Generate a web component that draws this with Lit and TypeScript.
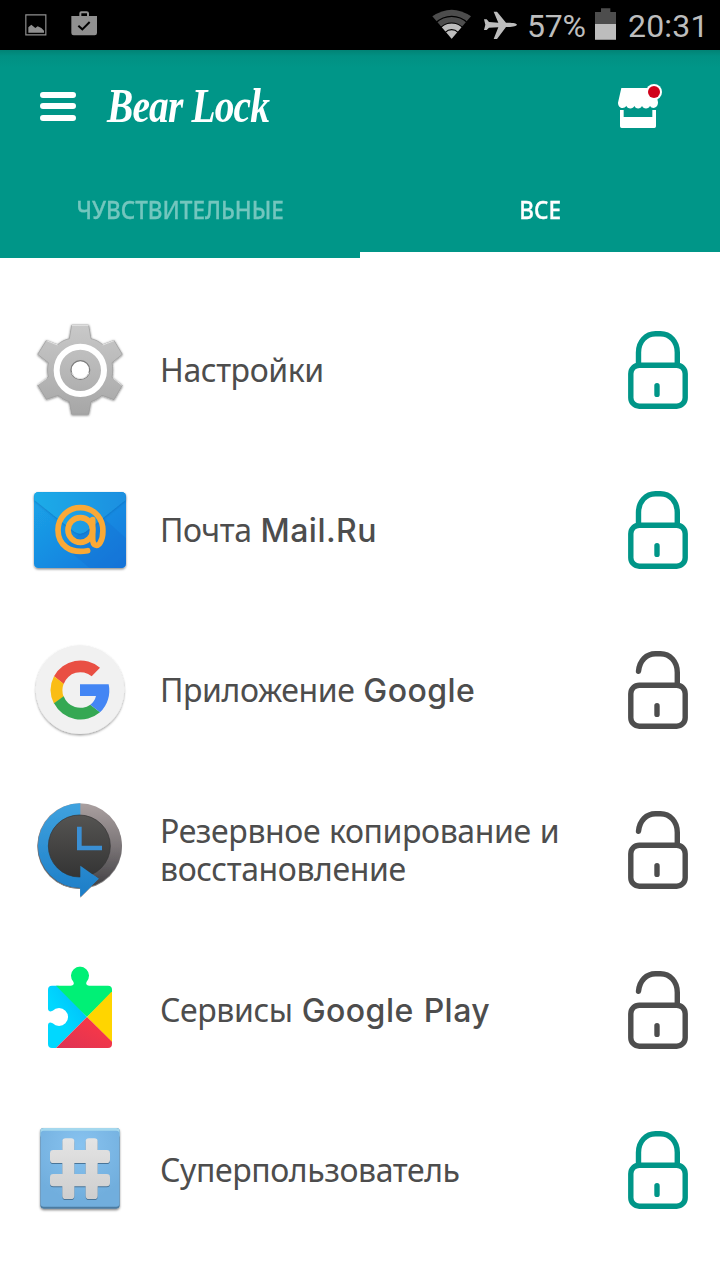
import { LitElement, html, svg, css } from 'lit';
import { customElement, property } from 'lit/decorators.js';
import { classMap } from 'lit/directives/class-map.js';

const settingsIcon = svg`
  <defs>
    <linearGradient id="steel" gradientUnits="userSpaceOnUse" x1="0" y1="44" x2="0" y2="315">
      <stop offset="0" stop-color="#c9c9c9" />
      <stop offset="1" stop-color="#a6a6a6" />
    </linearGradient>
    <filter id="gear-shadow" x="-20%" y="-20%" width="140%" height="140%">
      <feDropShadow dx="0" dy="2" stdDeviation="3" flood-color="#000" flood-opacity=".55" />
    </filter>
  </defs>
  <g filter="url(#gear-shadow)">
    <path fill="url(#steel)" stroke="#999" stroke-width="2" stroke-linejoin="round" d="M155 45H206L213 86C227 89 238 95 248 104L282 91L307 133L276 158C279 173 279 187 276 202L307 226L282 269L246 256C237 264 226 271 213 275L206 313H155L148 275C135 271 124 264 115 256L79 268L53 225L85 201C82 187 82 173 85 158L53 133L79 91L113 104C123 95 134 89 148 86Z" />
  </g>
  <path fill="none" stroke="#fff" stroke-width="2.5" opacity=".8" d="M155 46H206M80 92L113 105M248 105L282 92M54 224L80 205M280 205L306 226" />
  <circle cx="181" cy="181" r="71" fill="none" stroke="#fff" stroke-width="18" />
  <circle cx="181" cy="180" r="28" fill="#fff" stroke="#7d7d7d" stroke-width="4" />
  <path d="M155 188a28 28 0 0 0 52 0" fill="none" stroke="#e6e6e6" stroke-width="3" />
`;

const mailIcon = svg`
  <defs>
    <linearGradient id="mail-body" x1="0" y1="0" x2="1" y2="1">
      <stop offset="0" stop-color="#1ba5e8" />
      <stop offset="1" stop-color="#1476dc" />
    </linearGradient>
    <linearGradient id="mail-flap" x1="0" y1="0" x2="1" y2="0">
      <stop offset="0" stop-color="#1eace8" />
      <stop offset="1" stop-color="#1b8fe0" />
    </linearGradient>
    <filter id="mail-shadow" x="-10%" y="-10%" width="120%" height="125%">
      <feDropShadow dx="0" dy="4" stdDeviation="2.5" flood-color="#000" flood-opacity=".45" />
    </filter>
    <filter id="flap-shadow" x="-10%" y="-10%" width="120%" height="130%">
      <feDropShadow dx="0" dy="3" stdDeviation="3" flood-color="#0b4f9d" flood-opacity=".4" />
    </filter>
  </defs>
  <rect x="42" y="66" width="276" height="228" rx="13" fill="url(#mail-body)" filter="url(#mail-shadow)" />
  <path fill="#1268ca" opacity=".25" d="M240 134L318 205V280Q318 293 305 293H208L133 231Z" />
  <path fill="url(#mail-flap)" filter="url(#flap-shadow)" d="M43 90V79Q43 67 55 67H305Q317 67 317 79V90L199 184Q180 198 161 184Z" />
  <g fill="none" stroke="#faa936" stroke-width="17" stroke-linecap="round">
    <circle cx="181" cy="180" r="37" />
    <path d="M218 149V207C218 229 233 231 241 217C248 205 250 190 248 170C242 136 216 113 181 113C143 113 114 143 114 180C114 224 149 252 203 242" />
  </g>
`;

const googleIcon = svg`
  <defs>
    <filter id="disc-shadow" x="-10%" y="-10%" width="120%" height="125%">
      <feDropShadow dx="0" dy="4" stdDeviation="2.5" flood-color="#000" flood-opacity=".4" />
    </filter>
  </defs>
  <circle cx="180" cy="179" r="133" fill="#f1f1f1" filter="url(#disc-shadow)" />
  <path fill="#e94f43" d="M240 113A90 90 0 0 0 102 139L131 162A53 53 0 0 1 215 139Z" />
  <path fill="#fabd14" d="M102 139A90 90 0 0 0 102 221L131 200A53 53 0 0 1 131 161Z" />
  <path fill="#35a853" d="M102 220A90 90 0 0 0 240 247L211 224A53 53 0 0 1 131 199Z" />
  <path fill="#4486f4" d="M180 163H266A90 90 0 0 1 240 247L211 224A46 46 0 0 0 228 198H180Z" />
`;

const backupIcon = svg`
  <defs>
    <linearGradient id="ring-blue" gradientUnits="userSpaceOnUse" x1="0" y1="40" x2="0" y2="320">
      <stop offset="0" stop-color="#3fa2df" />
      <stop offset="1" stop-color="#1c7dc7" />
    </linearGradient>
    <linearGradient id="ring-gray" x1="0" y1="0" x2="0" y2="1">
      <stop offset="0" stop-color="#aaa0a0" />
      <stop offset=".5" stop-color="#7c7678" />
      <stop offset="1" stop-color="#403f42" />
    </linearGradient>
    <linearGradient id="dial" x1="0" y1="0" x2="0" y2="1">
      <stop offset="0" stop-color="#555452" />
      <stop offset="1" stop-color="#343434" />
    </linearGradient>
    <filter id="clock-shadow" x="-10%" y="-10%" width="120%" height="125%">
      <feDropShadow dx="0" dy="3" stdDeviation="2" flood-color="#000" flood-opacity=".5" />
    </filter>
  </defs>
  <g filter="url(#clock-shadow)">
    <circle cx="179" cy="167" r="127" fill="url(#ring-gray)" />
    <path fill="url(#ring-blue)" d="M181 40A127 127 0 0 0 181 294V320L236 266L181 227Z" />
  </g>
  <circle cx="178" cy="168" r="93" fill="url(#dial)" stroke="#333" stroke-width="2" />
  <path fill="url(#ring-blue)" d="M181 227L236 266L181 320Z" />
  <path fill="none" stroke="#3a8fd4" stroke-width="14" d="M178 110V174H246" />
`;

const playServicesIcon = svg`
  <defs>
    <clipPath id="puzzle">
      <path d="M96 107H153Q165 105 160 95A27 27 0 1 1 200 95Q195 105 207 107H264Q276 107 276 119V282Q276 294 264 294H96Q84 294 84 282V224Q86 214 98 220A27 27 0 1 0 98 182Q86 188 84 178V119Q84 107 96 107Z" />
    </clipPath>
    <linearGradient id="cyan" x1="1" y1="0" x2="0" y2="1">
      <stop offset="0" stop-color="#00b8f8" />
      <stop offset=".6" stop-color="#00d8ff" />
    </linearGradient>
    <linearGradient id="crimson" x1="1" y1="0" x2="0" y2="1">
      <stop offset="0" stop-color="#ff3a44" />
      <stop offset="1" stop-color="#dc3254" />
    </linearGradient>
  </defs>
  <g clip-path="url(#puzzle)">
    <path fill="url(#cyan)" d="M80 100H110L201 201L106 296H80Z" />
    <path fill="#00f076" d="M108 107L140 40H220L280 100V124L201 201Z" />
    <path fill="#ffd500" d="M277 123V278L201 201Z" />
    <path fill="url(#crimson)" d="M201 201L278 277V296H106Z" />
  </g>
`;

const hashPath = 'M137 88H153Q163 88 163 98V123H197V98Q197 88 207 88H223Q233 88 233 98V123H260Q270 123 270 133V152Q270 162 260 162H233V195H260Q270 195 270 205V222Q270 232 260 232H233V260Q233 270 223 270H207Q197 270 197 260V232H163V260Q163 270 153 270H137Q127 270 127 260V232H100Q90 232 90 222V205Q90 195 100 195H127V162H100Q90 162 90 152V133Q90 123 100 123H127V98Q127 88 137 88ZM163 162V195H197V162Z';

const superuserIcon = svg`
  <defs>
    <radialGradient id="tile" cx=".5" cy=".2" r=".7">
      <stop offset="0" stop-color="#88c3f0" />
      <stop offset="1" stop-color="#71aedd" />
    </radialGradient>
    <linearGradient id="hash" x1="0" y1="0" x2="0" y2="1">
      <stop offset="0" stop-color="#e4e4e4" />
      <stop offset="1" stop-color="#cecece" />
    </linearGradient>
    <filter id="tile-shadow" x="-10%" y="-10%" width="120%" height="125%">
      <feDropShadow dx="0" dy="4" stdDeviation="2.5" flood-color="#000" flood-opacity=".5" />
    </filter>
  </defs>
  <rect x="61" y="54" width="238" height="242" rx="10" fill="#4c7ca2" filter="url(#tile-shadow)" />
  <rect x="61" y="54" width="238" height="30" rx="10" fill="#a4d8ee" />
  <rect x="62" y="62" width="236" height="228" rx="9" fill="url(#tile)" />
  <path fill="#4a7598" d=${hashPath} />
  <path fill="url(#hash)" transform="translate(0 -3)" d=${hashPath} />
`;

const apps = [
  { icon: settingsIcon, name: 'Настройки', latin: '', locked: true },
  { icon: mailIcon, name: 'Почта', latin: 'Mail.Ru', locked: true },
  { icon: googleIcon, name: 'Приложение', latin: 'Google', locked: false },
  { icon: backupIcon, name: 'Резервное копирование и восстановление', latin: '', locked: false },
  { icon: playServicesIcon, name: 'Сервисы', latin: 'Google Play', locked: false },
  { icon: superuserIcon, name: 'Суперпользователь', latin: '', locked: true },
];

/**
 * Padlock toggle
 *
 * @property {boolean} locked - Whether the shackle is closed
 */
@customElement('lock-toggle')
export class LockToggle extends LitElement {
  @property({ type: Boolean }) locked = false;

  static styles = css`
    :host {
      display: block;
      width: 60px;
      height: 78px;
    }
    svg {
      display: block;
      fill: none;
      stroke: #4d4d4d;
      stroke-width: 5.4;
      stroke-linecap: round;
    }
    .locked {
      stroke: #009688;
    }
  `;

  render() {
    const shackle = this.locked
      ? 'M10.5 34V21.5C10.5 10.5 18 2.8 27.5 2.8h5C42 2.8 49.3 10.5 49.3 21.5V34'
      : 'M10.5 20.3C11.5 9.5 18.5 2.8 27.5 2.8h5C42 2.8 49.3 10.5 49.3 21.5V34';
    return html`
      <svg class=${classMap({ locked: this.locked })} width="60" height="78" viewBox="0 0 60 78">
        <rect x="2.8" y="34.2" width="54.4" height="41" rx="8.5" />
        <path d=${shackle} />
        <path d="M29 54.8v8.6" />
      </svg>
    `;
  }
}

/**
 * A row of the application list
 *
 * @slot - The application icon
 */
@customElement('app-row')
export class AppRow extends LitElement {
  @property() name = '';

  @property() latin = '';

  @property({ type: Boolean }) locked = false;

  static styles = css`
    :host {
      display: flex;
      align-items: center;
      height: 160px;
      padding: 0 32px 0 20px;
      box-sizing: border-box;
    }
    .name {
      flex: 1;
      padding: 0 40px 0 20px;
      color: #4d4d4d;
      font: 32px/38px "Noto Sans", sans-serif;
      letter-spacing: -0.4px;
      word-spacing: 1px;
    }
    .latin {
      font-family: Inter, sans-serif;
      font-weight: 500;
      letter-spacing: 0.45px;
    }
  `;

  render() {
    return html`
      <slot></slot>
      <div class="name">${this.name} <span class="latin">${this.latin}</span></div>
      <lock-toggle ?locked=${this.locked}></lock-toggle>
    `;
  }
}

@customElement('app-root')
export class AppRoot extends LitElement {
  static styles = css`
    :host {
      display: block;
      height: 1280px;
      overflow: hidden;
      background: #fff;
      font-family: "Noto Sans", sans-serif;
    }
    svg {
      display: block;
      flex: none;
    }
    .status {
      display: flex;
      align-items: center;
      height: 50px;
      padding: 0 14px 0 24px;
      box-sizing: border-box;
      background: #000;
      color: #bdbdbd;
      font: 32px/50px Roboto, sans-serif;
    }
    .spacer {
      flex: 1;
    }
    .wifi {
      margin-right: 4px;
    }
    .percent {
      margin: 2px 9px 0 9px;
      width: 59px;
      letter-spacing: -0.2px;
    }
    .time {
      margin: 2px 0 0 11px;
      width: 78px;
      letter-spacing: 0.2px;
    }
    header {
      height: 208px;
      background: linear-gradient(#018375, #019083 6px, #009688 18px);
    }
    .bar {
      display: flex;
      align-items: center;
      height: 112px;
      padding: 0 57px 0 40px;
    }
    h1 {
      flex: 1;
      margin: 0 0 0 31px;
      color: #fff;
      font: italic bold 48px/50px "Liberation Serif", serif;
      letter-spacing: -1px;
      transform: scaleX(0.82);
      transform-origin: left;
    }
    .tabs {
      display: flex;
      height: 96px;
    }
    .tab {
      flex: 1;
      box-sizing: border-box;
      height: 96px;
      border-bottom: 6px solid transparent;
      color: #73c6be;
      font-size: 25px;
      font-weight: 500;
      line-height: 94px;
      text-align: center;
    }
    .tab span {
      display: inline-block;
      transform: scaleX(0.9);
      -webkit-text-stroke: 0.3px;
    }
    .selected {
      border-bottom-color: #fff;
      color: #fff;
    }
    main {
      padding-top: 32px;
    }
  `;

  renderStatus() {
    return html`
      <div class="status">
        <svg width="24" height="50" viewBox="72 0 72 150">
          <path fill="none" stroke="#909090" stroke-width="3.5" d="M77.5 44.500h60v60h-60z" />
          <path fill="#909090" d="M85 98V82L94 74L106 84L113 79L124 84L132 92V98Z" />
        </svg>
        <svg width="50" height="50" viewBox="144 0 150 150">
          <path fill="#909090" fill-rule="evenodd" d="M214 48H238V40Q238 34 244 34H260Q267 34 267 40V48H291V99Q291 106 284 106H221Q214 106 214 99ZM244 40V48H261V40Z" />
          <path fill="none" stroke="#000" stroke-width="6" d="M235 77L247 88L269 66" />
        </svg>
        <span class="spacer"></span>
        <svg class="wifi" width="40" height="50" viewBox="36 0 120 150">
          <path fill="#4d4d4d" d="M95 116L37 49Q95 9 153 49Z" />
          <path fill="#bdbdbd" d="M95 116L65 81A46 46 0 0 1 125 81Z" />
          <g fill="none" stroke="#000" stroke-width="3.5">
            <circle cx="95" cy="116" r="67" />
            <circle cx="95" cy="116" r="47" />
            <circle cx="95" cy="116" r="27" />
          </g>
        </svg>
        <svg width="42" height="50" viewBox="168 0 126 150">
          <path fill="#bdbdbd" d="M291 74C289 70 280 68 258 68L231 35H221L235 68L207 66L200 58H192L196 74L192 90H200L207 83L235 82L221 117H231L258 81C280 81 289 78 291 74Z" />
        </svg>
        <span class="percent">57%</span>
        <svg width="22" height="50" viewBox="525 0 66 150">
          <path fill="#4d4d4d" d="M525 36H543V25H571V36H588V119H525Z" />
          <path fill="#bdbdbd" d="M525 72H588V119H525Z" />
        </svg>
        <span class="time">20:31</span>
      </div>
    `;
  }

  render() {
    return html`
      ${this.renderStatus()}
      <header>
        <div class="bar">
          <svg width="36" height="30" viewBox="0 0 36 30">
            <path stroke="#fff" stroke-width="6" stroke-linecap="round" d="M3 4h30M3 15h30M3 27h30" />
          </svg>
          <h1>Bear Lock</h1>
          <svg width="46" height="46" viewBox="591 249 138 138">
            <path fill="#fff" d="M604 264H705L714 307C714 326 695 328 690 317C687 328 669 328 666 317C663 328 646 328 643 317C640 328 622 328 619 317C613 328 594 326 594 308Z" />
            <path fill="#fff" d="M600 330H611V351H697V330H708V379Q708 384 703 384H605Q600 384 600 379Z" />
            <circle cx="702" cy="276" r="24" fill="#fff" />
            <circle cx="702" cy="276" r="18" fill="#d0021b" />
          </svg>
        </div>
        <div class="tabs">
          <div class="tab"><span>ЧУВСТВИТЕЛЬНЫЕ</span></div>
          <div class="tab selected"><span>ВСЕ</span></div>
        </div>
      </header>
      <main>
        ${apps.map((app) => html`
          <app-row name=${app.name} latin=${app.latin} ?locked=${app.locked}>
            <svg width="120" height="120" viewBox="0 0 360 360">${app.icon}</svg>
          </app-row>
        `)}
      </main>
    `;
  }
}
